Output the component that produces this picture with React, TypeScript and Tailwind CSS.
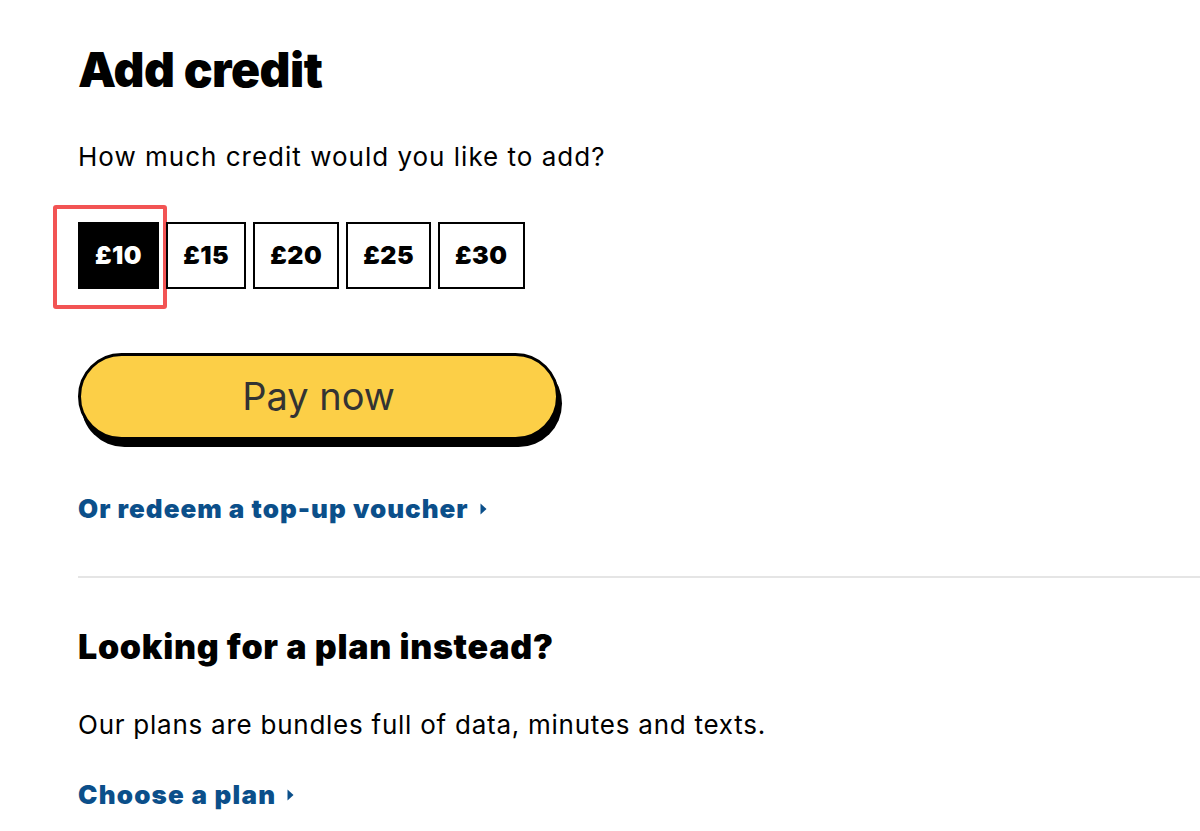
import { useState } from "react";

const AMOUNTS = [10, 15, 20, 25, 30];

function Chevron() {
  return (
    <svg width="9" height="14" viewBox="0 0 9 14" className="ml-[10px] inline-block" aria-hidden="true">
      <path d="M1.5 1.5 L7.5 7 L1.5 12.5 Z" fill="currentColor" />
    </svg>
  );
}

export default function App() {
  const [amount, setAmount] = useState(10);

  return (
    <main className="min-h-screen bg-white pl-[78px] font-['Inter',sans-serif] text-black">
      <h1 className="pt-[40px] text-[48px] font-black leading-[60px] tracking-[-0.5px]">Add credit</h1>

      <p className="mt-[41px] text-[26px] leading-[32px] tracking-[1px]">How much credit would you like to add?</p>

      <div className="mt-[49px] flex gap-[7px]">
        {AMOUNTS.map((value) => {
          const selected = value === amount;
          return (
            <div key={value} className="relative">
              <button
                onClick={() => setAmount(value)}
                className={`flex h-[67px] items-center justify-center border-2 border-black px-[15px] text-[25px] font-black tracking-[0.5px] ${
                  selected ? "bg-black text-white" : "bg-white text-black"
                }`}
              >
                £{value}
              </button>
              {selected ? (
                <span className="pointer-events-none absolute -top-[17px] -bottom-[20px] -left-[25px] -right-[8px] rounded-[3px] border-4 border-[#f25454]" />
              ) : null}
            </div>
          );
        })}
      </div>

      <button className="mt-[64px] flex h-[87px] w-[481px] items-center justify-center rounded-full border-[3px] border-black bg-[#fccf47] text-[38px] text-[#333] shadow-[3px_7px_0_#000]">
        Pay now
      </button>

      <a href="#" className="mt-[53px] flex items-center text-[26px] font-black leading-[32px] tracking-[1px] text-[#0b4f8a]">
        Or redeem a top-up voucher
        <Chevron />
      </a>

      <hr className="mt-[51px] border-t-2 border-[#e5e5e5]" />

      <h2 className="mt-[49px] text-[34px] font-black leading-[40px] tracking-[0.7px]">Looking for a plan instead?</h2>

      <p className="mt-[42px] text-[26px] leading-[32px] tracking-[0.75px]">
        Our plans are bundles full of data, minutes and texts.
      </p>

      <a href="#" className="mt-[38px] flex items-center text-[26px] font-black leading-[32px] tracking-[1.2px] text-[#0b4f8a]">
        Choose a plan
        <Chevron />
      </a>
    </main>
  );
}
